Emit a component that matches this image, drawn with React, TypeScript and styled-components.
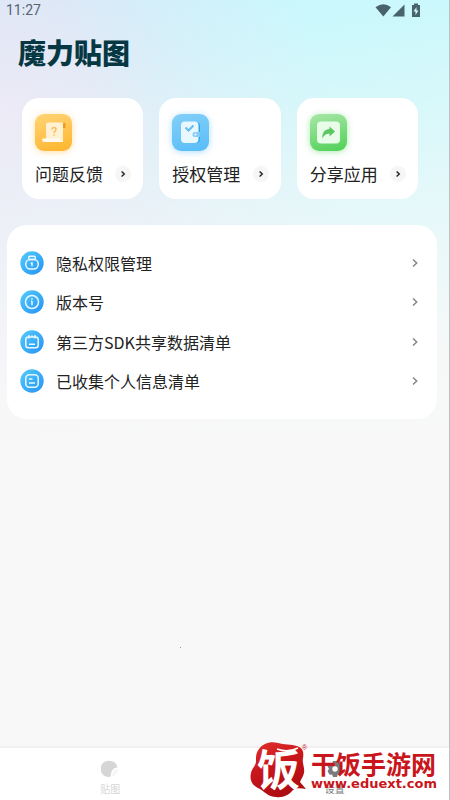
import React from "react";
import styled, { createGlobalStyle } from "styled-components";

const sans = `"Noto Sans CJK SC", "Noto Sans", sans-serif`;

const GlobalStyle = createGlobalStyle`
  * { box-sizing: border-box; }
  body { margin: 0; background: #f8f8f8; font-family: ${sans}; color: #222; }
`;

const Page = styled.div`
  position: relative;
  display: flex;
  flex-direction: column;
  min-height: 100vh;
  border-right: 1px solid #b9c3c5;
  background:
    linear-gradient(#999, #999) 180px 647px / 1px 1px no-repeat,
    linear-gradient(172deg, rgba(248, 248, 248, 0) 0%, rgba(248, 248, 248, 0.12) 15%, rgba(248, 248, 248, 0.6) 50%, rgba(248, 248, 248, 0.95) 80%, #f8f8f8 100%) 0 0 / 100% 440px no-repeat,
    radial-gradient(ellipse 170px 150px at 0 110px, rgba(238, 230, 245, 0.7), rgba(238, 230, 245, 0)) 0 0 / 100% 440px no-repeat,
    linear-gradient(75deg, #dfe6f6 0%, #dbe8f7 30%, #c6f8fc 75%) 0 0 / 100% 440px no-repeat,
    #f8f8f8;
`;

const StatusBar = styled.header`
  display: flex;
  align-items: center;
  justify-content: space-between;
  height: 20px;
  padding: 0 28px 0 6px;
  font: 14px/20px Roboto, sans-serif;
  color: #53666d;
`;

const StatusIcons = styled.div`
  display: flex;
  align-items: center;
  color: #49636a;
`;

const Title = styled.h1`
  margin: 12px 18px 0;
  font-size: 28px;
  line-height: 40px;
  font-weight: 900;
  color: #063844;
`;

const Cards = styled.div`
  display: grid;
  grid-template-columns: repeat(3, 1fr);
  gap: 16px;
  padding: 0 31px 0 22px;
  margin-top: 26px;
`;

const Button = styled.button`
  display: flex;
  padding: 0;
  border: 0;
  background: none;
  color: inherit;
  font: inherit;
  cursor: pointer;
`;

const Card = styled(Button)`
  flex-direction: column;
  align-items: stretch;
  gap: 10px;
  padding: 16px 12px 12px 13px;
  background: #fff;
  border-radius: 17px;
  text-align: left;
`;

const Tile = styled.span<{ $from: string; $to: string; $glow: string }>`
  display: flex;
  width: 37px;
  height: 37px;
  border-radius: 9px;
  background: linear-gradient(165deg, ${p => p.$from}, ${p => p.$to});
  box-shadow: 0 1px 6px ${p => p.$glow};
`;

const CardLabel = styled.span`
  display: flex;
  align-items: center;
  justify-content: space-between;
  font-size: 17px;
  line-height: 26px;
  white-space: nowrap;
`;

const Round = styled.span`
  display: flex;
  align-items: center;
  justify-content: center;
  width: 16px;
  height: 16px;
  border-radius: 50%;
  background: #f6f6f6;
`;

const Panel = styled.ul`
  display: grid;
  grid-template-rows: repeat(4, 1fr);
  min-height: 194px;
  margin: 26px 12px 0 7px;
  padding: 18px 18px 18px 13px;
  border-radius: 20px;
  background: #fff;
  list-style: none;
`;

const Item = styled.li`
  display: flex;
`;

const Row = styled(Button)`
  flex: 1;
  align-items: center;
  gap: 12px;
  text-align: left;
`;

const RowText = styled.span`
  flex: 1;
  font-size: 16px;
  line-height: 24px;
`;

const Nav = styled.nav`
  display: grid;
  grid-template-columns: 1fr 1fr;
  height: 54px;
  margin-top: auto;
  border-top: 2px solid #f1f1f1;
  background: #fff;
`;

const Tab = styled(Button)<{ $active?: boolean }>`
  flex-direction: column;
  align-items: center;
  gap: 4px;
  padding: 12px 4px 0 0;
  font-size: 10px;
  line-height: 14px;
  color: ${p => (p.$active ? "#777b7e" : "#d6d6d6")};
`;

const Watermark = styled.div`
  position: absolute;
  right: 12px;
  bottom: 0;
  display: flex;
  align-items: flex-start;
  height: 59px;
  color: #c9161c;
  pointer-events: none;
`;

const Brand = styled.div`
  display: flex;
  flex-direction: column;
  padding-top: 8px;
`;

const BrandName = styled.span`
  font-size: 25px;
  line-height: 28px;
  font-weight: 700;
`;

const BrandUrl = styled.span`
  font: bold 13px/14px "DejaVu Sans", sans-serif;
`;

const Logo = styled.svg`
  overflow: visible;
`;

const Chevron = ({ small }: { small?: boolean }) =>
  small ? (
    <svg width="8" height="8" viewBox="0 0 8 8" fill="none" stroke="#222" strokeWidth="1.4">
      <path d="M2.6 1.5 5.3 4 2.6 6.5" />
    </svg>
  ) : (
    <svg width="8" height="10" viewBox="0 0 8 10" fill="none" stroke="#858585" strokeWidth="1.5">
      <path d="M2 1.5 5.700 5 2 8.500" />
    </svg>
  );

const FeedbackArt = () => (
  <svg width="37" height="37" viewBox="0 0 37 37">
    <path d="M27 8.500h2q1.500 0 1.500 2V14H27z" fill="#f39a13" />
    <path d="M11 10.500q0-2 2-2h16q-1 0-1 2V28H11z" fill="#fff1d2" />
    <path d="M7.500 24.500H25q0 3.500 3 3.500H9q-2.500 0-1.500-3.500z" fill="#fffaf0" />
    <path d="M17 15.500q0-2 2-2t2 2c0 1.500-2 1.700-2 3.500M19 20.300v1.400" fill="none" stroke="#f9bd62" strokeWidth="1.500" />
  </svg>
);

const PermissionArt = () => (
  <svg width="37" height="37" viewBox="0 0 37 37">
    <rect x="13" y="8" width="15" height="21" rx="4" fill="#2ea6ef" />
    <rect x="9" y="7.500" width="17.500" height="21.500" rx="4" fill="#e9f8ff" />
    <path d="m13.500 13.500 3 3 5-5" fill="none" stroke="#63bdf2" strokeWidth="2" />
    <path d="M20.500 20.500a2.500 2.500 0 0 1 2.500-2.500h5v5h-5a2.500 2.500 0 0 1-2.500-2.500z" fill="#83cdf7" />
    <circle cx="23.500" cy="20.500" r="1" fill="#fff" />
  </svg>
);

const ShareArt = () => (
  <svg width="37" height="37" viewBox="0 0 37 37">
    <rect x="7" y="7.500" width="23" height="22" rx="4" fill="#e9fbe9" />
    <path d="M12.300 24.500c-.3-6 2.500-9.300 7.200-9.500v-2.500l5.500 5-5.500 5v-2.700c-3.500 0-5.300 1.200-7.200 4.700z" fill="#5cc763" />
  </svg>
);

const glyphs: Record<string, React.ReactNode> = {
  privacy: (
    <>
      <rect x="5.700" y="8.500" width="12.600" height="9.500" rx="4.700" />
      <rect x="8.700" y="5.300" width="6.600" height="3.200" rx="1.200" />
      <path d="M12 11.300v4M10.700 12.300H12" />
    </>
  ),
  version: (
    <>
      <circle cx="12" cy="12" r="6.500" />
      <path d="M12 11v4.200M12 8.300v1.400M11 11.200h1" />
    </>
  ),
  sdk: (
    <>
      <rect x="5.800" y="7" width="12.400" height="10.800" rx="2.500" />
      <path d="M9 5v3.500M12 5.500v2M15 5v3.500M9 14.200h6" />
    </>
  ),
  info: (
    <>
      <rect x="5.800" y="5.800" width="12.400" height="12.400" rx="3.500" />
      <path d="M9 10h3.500M9 14h6" />
    </>
  ),
};

const RowIcon = ({ kind }: { kind: string }) => (
  <svg width="24" height="24" viewBox="0 0 24 24">
    <defs>
      <linearGradient id={`disc-${kind}`} x1="0" y1="0" x2="1" y2="1">
        <stop offset="0" stopColor="#53ccfb" />
        <stop offset="1" stopColor="#2492f5" />
      </linearGradient>
    </defs>
    <circle cx="12" cy="12" r="11.700" fill={`url(#disc-${kind})`} />
    <g fill="none" stroke="#e9f7ff" strokeWidth="1.500">{glyphs[kind]}</g>
  </svg>
);

const BrandLogo = () => (
  <Logo width="61" height="59" viewBox="0 0 61 59">
    <defs>
      <linearGradient id="seal" x1="0" y1="0" x2="0.400" y2="1">
        <stop offset="0" stopColor="#e2312e" />
        <stop offset="0.500" stopColor="#c9161c" />
        <stop offset="1" stopColor="#ae0d13" />
      </linearGradient>
    </defs>
    <path d="M9 8C13 2 21 0 28 2c6 2 13 1 19 3 6 2 7 6 6 12-1 5 2 10 1 15-1 4-3 6-4 9l6 7c-6-1-10-1-13 1-4 5-10 8-17 7-7 0-10-4-16-8C3 45-1 40 1 32c1-5 5-7 5-12 0-5 0-8 3-12z" fill="url(#seal)" />
    <path d="M27 8c8 3 15 2 21-1" fill="none" stroke="#fff" strokeWidth="1.500" />
    <text x="7" y="45" fontSize="43" fontWeight="700" fill="#fff" fontFamily="Noto Sans CJK SC, sans-serif">饭</text>
    <text x="52" y="9" fontSize="7" fill="#c9161c" fontFamily="Liberation Sans, sans-serif">®</text>
  </Logo>
);

const cards = [
  { label: "问题反馈", from: "#ffd476", to: "#fdb52d", glow: "rgba(255,190,70,.5)", art: <FeedbackArt /> },
  { label: "授权管理", from: "#84cff9", to: "#57bdf8", glow: "rgba(95,190,250,.5)", art: <PermissionArt /> },
  { label: "分享应用", from: "#a9e7a8", to: "#4fd056", glow: "rgba(95,215,100,.5)", art: <ShareArt /> },
];

const rows = [
  { kind: "privacy", label: "隐私权限管理" },
  { kind: "version", label: "版本号" },
  { kind: "sdk", label: "第三方SDK共享数据清单" },
  { kind: "info", label: "已收集个人信息清单" },
];

export default function App() {
  return (
    <Page lang="zh-CN">
      <GlobalStyle />
      <StatusBar>
        <span>11:27</span>
        <StatusIcons>
          <svg width="46" height="16" viewBox="0 0 46 16" fill="currentColor">
            <path d="M.5 5.200Q8.500-.5 16 5.200L8.300 14.500z" />
            <path d="M29.500 2.500V14.500H17.500z" />
            <path d="M37 3h2V1.500h4V3h2v12h-8z" />
            <path d="m41.500 5-3 4.500h2V13l3-4.500h-2z" fill="#d9f8fb" />
          </svg>
        </StatusIcons>
      </StatusBar>
      <Title>魔力贴图</Title>
      <Cards>
        {cards.map(c => (
          <Card key={c.label}>
            <Tile $from={c.from} $to={c.to} $glow={c.glow}>{c.art}</Tile>
            <CardLabel>
              {c.label}
              <Round><Chevron small /></Round>
            </CardLabel>
          </Card>
        ))}
      </Cards>
      <Panel>
        {rows.map(r => (
          <Item key={r.kind}>
            <Row>
              <RowIcon kind={r.kind} />
              <RowText>{r.label}</RowText>
              <Chevron />
            </Row>
          </Item>
        ))}
      </Panel>
      <Nav>
        <Tab>
          <svg width="18" height="18" viewBox="0 0 18 18" fill="currentColor">
            <path d="M9 1a8 8 0 0 1 7.500 6.500c-4 .2-6.500 2.500-6.700 9A8 8 0 1 1 9 1z" />
            <path d="M17 9c-.5 4-2.500 6.500-6 7.500.2-4.500 2-7 6-7.500z" opacity=".25" />
          </svg>
          贴图
        </Tab>
        <Tab $active>
          <svg width="18" height="18" viewBox="0 0 18 18" fill="currentColor" fillRule="evenodd">
            <path d="M7 1h4l.7 2.200 2.300-.5 2.500 3.500L15 8.500l1.500 2.800-2.200 3.500-2.600-.4L11 17H7l-.8-2.500-2.500.3-2.200-3.500L3 8.700 1.500 6.200 4 2.700l2.300.5zM9 6.300a2.700 2.700 0 1 0 0 5.400 2.700 2.700 0 0 0 0-5.400z" />
          </svg>
          设置
        </Tab>
      </Nav>
      <Watermark>
        <BrandLogo />
        <Brand>
          <BrandName>干饭手游网</BrandName>
          <BrandUrl>www.eduext.com</BrandUrl>
        </Brand>
      </Watermark>
    </Page>
  );
}
